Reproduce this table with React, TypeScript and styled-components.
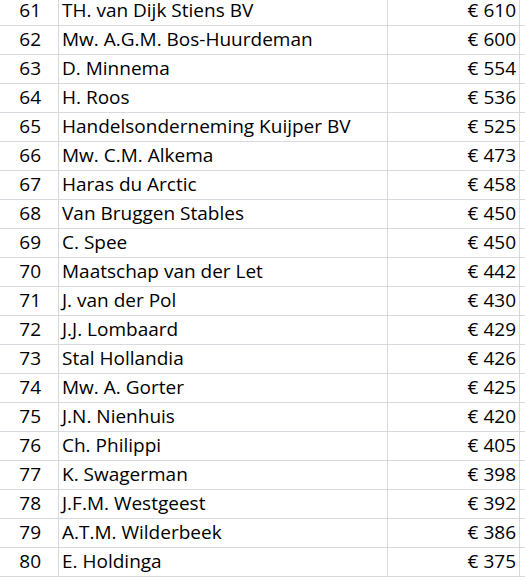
import React from "react";
import styled, { createGlobalStyle } from "styled-components";

const Global = createGlobalStyle`
  html, body { margin: 0; padding: 0; background: #ffffff; overflow: hidden; }
  body { font-family: "Open Sans", "Liberation Sans", sans-serif; }
`;

const Sheet = styled.div`
  display: grid;
  grid-template-columns: 59px 329px 132px 1fr;
  grid-auto-rows: 29px;
  margin-top: -3px;
  width: 525px;
`;

const Cell = styled.div<{ $align?: "left" | "right" }>`
  box-sizing: border-box;
  border-right: 1px solid #d6d9de;
  border-bottom: 1px solid #d6d9de;
  display: flex;
  align-items: flex-end;
  justify-content: ${(p) => (p.$align === "right" ? "flex-end" : "flex-start")};
  padding: 0 3px 2px 3px;
  font-size: 19px;
  line-height: 26px;
  color: #000;
  white-space: nowrap;
  overflow: hidden;
`;

const NumCell = styled(Cell)`
  padding-right: 17px;
`;

const EmptyCell = styled(Cell)`
  border-right: none;
`;

const rows: [number, string, number][] = [
  [61, "TH. van Dijk Stiens BV", 610],
  [62, "Mw. A.G.M. Bos-Huurdeman", 600],
  [63, "D. Minnema", 554],
  [64, "H. Roos", 536],
  [65, "Handelsonderneming Kuijper BV", 525],
  [66, "Mw. C.M. Alkema", 473],
  [67, "Haras du Arctic", 458],
  [68, "Van Bruggen Stables", 450],
  [69, "C. Spee", 450],
  [70, "Maatschap van der Let", 442],
  [71, "J. van der Pol", 430],
  [72, "J.J. Lombaard", 429],
  [73, "Stal Hollandia", 426],
  [74, "Mw. A. Gorter", 425],
  [75, "J.N. Nienhuis", 420],
  [76, "Ch. Philippi", 405],
  [77, "K. Swagerman", 398],
  [78, "J.F.M. Westgeest", 392],
  [79, "A.T.M. Wilderbeek", 386],
  [80, "E. Holdinga", 375],
];

export default function App() {
  return (
    <>
      <Global />
      <Sheet>
        {rows.map(([n, name, amt]) => (
          <React.Fragment key={n}>
            <NumCell $align="right">{n}</NumCell>
            <Cell>{name}</Cell>
            <Cell $align="right">€ {amt}</Cell>
            <EmptyCell />
          </React.Fragment>
        ))}
      </Sheet>
    </>
  );
}
